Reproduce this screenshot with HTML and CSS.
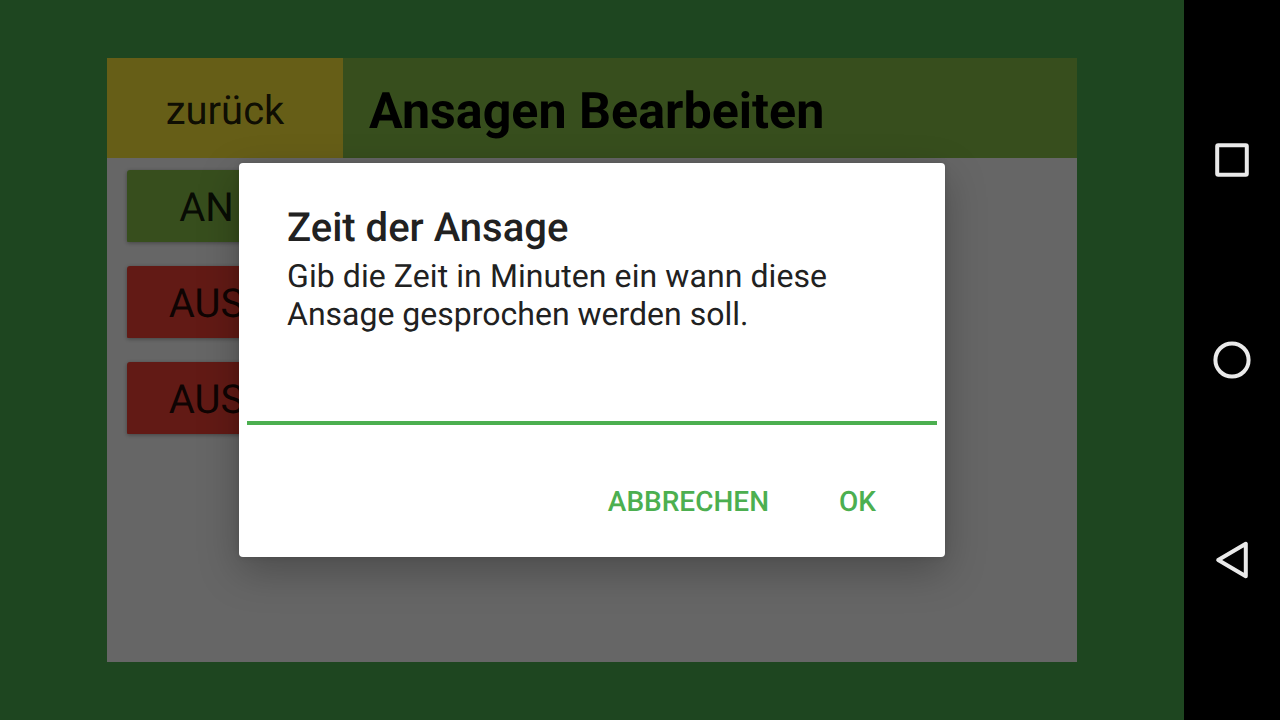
FILE: index.html
```html
<!DOCTYPE html>
<html lang="de">
<head>
  <meta charset="UTF-8">
  <title>Ansagen Bearbeiten</title>
  <link rel="stylesheet" href="styles.css">
</head>
<body>
  <main class="screen">
    <section class="panel">
      <header class="panel-header">
        <button class="back">zurück</button>
        <h1>Ansagen Bearbeiten</h1>
      </header>
      <div class="list">
        <button class="toggle on">AN</button>
        <button class="toggle off">AUS</button>
        <button class="toggle off">AUS</button>
      </div>
    </section>

    <div class="overlay">
      <div class="dialog" role="dialog" aria-labelledby="dialogTitle">
        <h2 id="dialogTitle">Zeit der Ansage</h2>
        <p>Gib die Zeit in Minuten ein wann diese Ansage gesprochen werden soll.</p>
        <input class="minutes" type="text" aria-label="Minuten">
        <div class="actions">
          <button>ABBRECHEN</button>
          <button>OK</button>
        </div>
      </div>
    </div>
  </main>

  <nav class="navbar">
    <svg viewBox="0 0 48 48"><rect x="9.2" y="9.2" width="29.6" height="29.6" rx="1"/></svg>
    <svg viewBox="0 0 48 48"><circle cx="24" cy="24" r="16.6"/></svg>
    <svg viewBox="0 0 48 48"><path d="M37.8 7.8V40.2L10.2 24Z"/></svg>
  </nav>
</body>
</html>
```

FILE: styles.css
```css
* {
  box-sizing: border-box;
}
body {
  display: flex;
  width: 1280px;
  height: 720px;
  margin: 0;
  overflow: hidden;
  font-family: Roboto, sans-serif;
  text-rendering: geometricPrecision;
}
h1, h2, p {
  margin: 0;
}
button {
  padding: 0;
  border: none;
  font-family: inherit;
  text-rendering: inherit;
}
.screen {
  position: relative;
  width: 1184px;
  padding: 58px 107px;
  background: #4caf50;
}
.panel {
  height: 604px;
  background: #fff;
}
.panel-header {
  display: flex;
  align-items: center;
  height: 100px;
  background: #8bc34a;
}
.back {
  width: 236px;
  height: 100px;
  padding-top: 4px;
  background: #ffeb3b;
  color: rgba(0, 0, 0, 0.87);
  font-size: 40px;
}
h1 {
  padding: 6px 0 0 26px;
  font-size: 50.2px;
  font-weight: bold;
}
.list {
  display: flex;
  flex-direction: column;
  gap: 24px;
  padding: 12px 20px;
}
.toggle {
  width: 159px;
  height: 72px;
  padding-top: 3px;
  border-radius: 3px 3px 1px 1px;
  box-shadow: 0 1px 4px rgba(0, 0, 0, 0.35);
  color: rgba(0, 0, 0, 0.87);
  font-size: 40px;
}
.on {
  background: #8bc34a;
}
.off {
  background: #f44336;
}

/* dialog */
.overlay {
  position: absolute;
  inset: 0;
  display: flex;
  align-items: center;
  justify-content: center;
  background: rgba(0, 0, 0, 0.6);
}
.dialog {
  width: 706px;
  height: 394px;
  padding: 40px 8px 0;
  border-radius: 4px;
  background: #fff;
  color: #212121;
  box-shadow: 0 14px 40px rgba(0, 0, 0, 0.26), 0 0 6px rgba(0, 0, 0, 0.12);
}
.dialog h2 {
  padding: 0 40px;
  font-size: 40px;
  font-weight: 500;
  line-height: 50px;
}
.dialog p {
  padding: 4px 40px 0;
  font-size: 32px;
  line-height: 38px;
}
.dialog p::first-line {
  letter-spacing: 0.08px;
}
.minutes {
  display: block;
  width: 100%;
  height: 92px;
  padding: 0 40px;
  border: none;
  border-bottom: 4px solid #4caf50;
  background: none;
  font: 36px Roboto, sans-serif;
}
.actions {
  display: flex;
  justify-content: flex-end;
  gap: 70px;
  padding: 60px 61px 0 0;
}
.actions button {
  background: none;
  color: #4caf50;
  font-size: 28px;
  font-weight: 500;
}

/* system buttons */
.navbar {
  display: flex;
  flex-direction: column;
  align-items: center;
  justify-content: center;
  gap: 152px;
  width: 96px;
  background: #000;
}
.navbar svg {
  width: 48px;
  height: 48px;
  fill: none;
  stroke: #eaeaea;
  stroke-width: 4;
  stroke-linejoin: round;
}
```
